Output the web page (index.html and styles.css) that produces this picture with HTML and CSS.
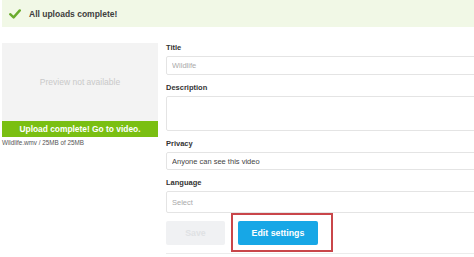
FILE: index.html
```html
<!DOCTYPE html>
<html lang="en">
<head>
    <meta charset="UTF-8">
    <meta name="viewport" content="width=device-width, initial-scale=1.0">
    <title>Upload</title>
    <link rel="stylesheet" href="styles.css">
</head>
<body>

    <div class="banner">
        <svg class="check" width="12" height="10" viewBox="0 0 12 10">
            <path d="M1.2 5.2 L4.6 8.4 L10.8 1.4" fill="none" stroke="#6aab2e" stroke-width="2.4" stroke-linecap="round" stroke-linejoin="round"/>
        </svg>
        <span>All uploads complete!</span>
    </div>

    <div class="main">
        <div class="upload">
            <div class="preview">Preview not available</div>
            <div class="upload-bar">Upload complete! Go to video.</div>
            <p class="file-info">Wildlife.wmv / 25MB of 25MB</p>
        </div>

        <div class="form">
            <div class="field">
                <label>Title</label>
                <input type="text" class="title-input" placeholder="Wildlife">
            </div>
            <div class="field">
                <label>Description</label>
                <textarea class="desc-input"></textarea>
            </div>
            <div class="field">
                <label>Privacy</label>
                <input type="text" class="privacy-input" value="Anyone can see this video">
            </div>
            <div class="field last">
                <label>Language</label>
                <input type="text" class="lang-input" placeholder="Select">
            </div>
            <div class="actions">
                <button class="btn-save">Save</button>
                <div class="highlight">
                    <button class="btn-edit">Edit settings</button>
                </div>
            </div>
        </div>
    </div>

</body>
</html>
```

FILE: styles.css
```css
/* General Styles */
* {
    margin: 0;
    padding: 0;
    box-sizing: border-box;
}

body {
    font-family: "Liberation Sans", Arial, sans-serif;
    background-color: #fff;
    width: 474px;
    height: 257px;
    overflow: hidden;
    color: #333;
}

/* Top banner */
.banner {
    margin-left: 2px;
    height: 27px;
    background-color: #f1f8e6;
    display: flex;
    align-items: center;
    padding-left: 7px;
    gap: 8px;
    font-size: 8.5px;
    font-weight: bold;
    color: #3d3d3d;
}

.check {
    flex-shrink: 0;
}

/* Main area */
.main {
    display: flex;
    gap: 8px;
    padding: 16px 0 0 2px;
}

.upload {
    width: 156px;
    flex-shrink: 0;
}

.preview {
    height: 78px;
    background-color: #f3f3f3;
    display: flex;
    justify-content: center;
    align-items: center;
    font-size: 8.5px;
    color: #c9c9c9;
}

.upload-bar {
    height: 16px;
    background-color: #7abf12;
    color: white;
    font-size: 8.4px;
    font-weight: bold;
    display: flex;
    justify-content: center;
    align-items: center;
}

.file-info {
    margin-top: 2px;
    font-size: 6.3px;
    color: #555;
}

/* Form */
.form {
    flex: 0 0 320px;
}

.field {
    margin-bottom: 8px;
}

.field.last {
    margin-bottom: 0;
}

.field label {
    display: block;
    font-size: 7.5px;
    line-height: 9px;
    font-weight: bold;
    color: #333;
    margin-bottom: 4px;
}

input, textarea {
    display: block;
    width: 100%;
    border: 1px solid #e4e4e4;
    border-radius: 2px;
    padding: 0 5px;
    font-family: inherit;
    font-size: 7.5px;
    color: #444;
    outline: none;
    resize: none;
}

input::placeholder {
    color: #aaa;
}

.title-input {
    height: 19px;
}

.desc-input {
    height: 35px;
}

.privacy-input {
    height: 18px;
}

.lang-input {
    height: 22px;
}

.actions {
    display: flex;
    align-items: flex-start;
    gap: 6px;
    padding-bottom: 1px;
    border-bottom: 1px solid #ececec;
}

button {
    border: none;
    border-radius: 2px;
    height: 24px;
    font-family: inherit;
    font-weight: bold;
    font-size: 8.8px;
    cursor: pointer;
}

.btn-save {
    margin-top: 8px;
    width: 59px;
    background-color: #f0f1f3;
    color: #dfe1e4;
}

.highlight {
    border: 2px solid #c9464a;
    padding: 6px 13px 5px 5px;
}

.btn-edit {
    display: block;
    width: 80px;
    background-color: #17a7e6;
    color: white;
}
```
